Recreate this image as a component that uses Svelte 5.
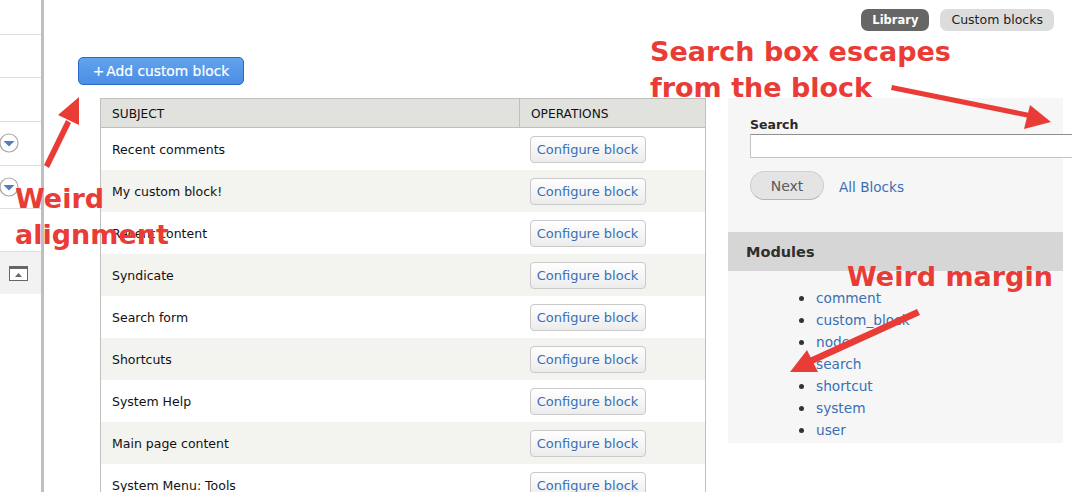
<script>
	const blocks = [
		'Recent comments',
		'My custom block!',
		'Recent content',
		'Syndicate',
		'Search form',
		'Shortcuts',
		'System Help',
		'Main page content',
		'System Menu: Tools'
	];
	const modules = ['comment', 'custom_block', 'node', 'search', 'shortcut', 'system', 'user'];
	const rail_rows = [
		{ height: 35 },
		{ height: 43 },
		{ height: 44 },
		{ height: 44, toggle: true },
		{ height: 43, toggle: true },
		{ height: 43 },
		{ height: 42, tray: true }
	];
</script>

<div class="page">
	<aside class="rail">
		{#each rail_rows as row}
			<div class="rail-row" class:tray={row.tray} style="height: {row.height}px">
				{#if row.toggle}
					<svg class="toggle" width="20" height="20" viewBox="0 0 20 20">
						<circle cx="9" cy="10" r="9" fill="#fff" stroke="#a8a8a8" stroke-width="1.2" />
						<path d="M3.5 8h11L9 13.5z" fill="#4f7fbd" />
					</svg>
				{/if}
				{#if row.tray}
					<svg class="tray-icon" width="20" height="16" viewBox="0 0 20 16">
						<rect x="0.5" y="0.5" width="18" height="14" fill="#fff" stroke="#666" />
						<rect x="0" y="0" width="19" height="3" fill="#666" />
						<path d="M6 11l3.5-4 3.5 4z" fill="#666" />
					</svg>
				{/if}
			</div>
		{/each}
	</aside>

	<main class="main">
		<nav class="tabs">
			<a class="tab active" href="#library">Library</a>
			<a class="tab" href="#custom">Custom blocks</a>
		</nav>

		<a class="add-button" href="#add"><span class="plus">+</span>Add custom block</a>

		<div class="columns">
			<table>
				<thead>
					<tr>
						<th class="subject">SUBJECT</th>
						<th>OPERATIONS</th>
					</tr>
				</thead>
				<tbody>
					{#each blocks as block}
						<tr>
							<td>{block}</td>
							<td class="operation"><a class="configure" href="#configure">Configure block</a></td>
						</tr>
					{/each}
				</tbody>
			</table>

			<section class="filters">
				<div class="search">
					<label for="search">Search</label>
					<input id="search" type="text" />
					<div class="search-actions">
						<button type="button">Next</button>
						<a href="#all">All Blocks</a>
					</div>
				</div>
				<h3>Modules</h3>
				<ul>
					{#each modules as name}
						<li><a href="#{name}">{name}</a></li>
					{/each}
				</ul>
			</section>
		</div>
	</main>

	<!-- red annotations drawn on top of the screenshot -->
	<div class="note search-note">Search box escapes<br />from the block</div>
	<div class="note margin-note">Weird margin</div>
	<div class="note align-note">Weird<br />alignment</div>
	<svg class="arrows" width="1072" height="492" viewBox="0 0 1072 492">
		<g fill="#ea3c37" stroke="none">
			<path d="M44 165L66 120 71 123 49 168z" />
			<path d="M79 97L58 115 79 125z" />
			<path d="M892 85L1035 114 1034 119 891 90z" />
			<path d="M1051 122L1030 105 1024 129z" />
			<path d="M917 309L805 360 808 366 920 315z" />
			<path d="M790 372L807 350 818 372z" />
		</g>
	</svg>
</div>

<style>
	:global(body) {
		margin: 0;
		background: #fff;
	}

	.page {
		position: relative;
		display: flex;
		width: 1072px;
		height: 492px;
		overflow: hidden;
		font-family: 'DejaVu Sans', Verdana, sans-serif;
		font-size: 12.5px;
		color: #111;
	}

	.rail {
		flex: none;
		width: 41px;
		border-right: 3px solid #bfbfbf;
	}

	.rail-row {
		position: relative;
		box-sizing: border-box;
		border-bottom: 1px solid #dedede;
	}

	.rail-row.tray {
		background: #f2f2f2;
		border-bottom: none;
	}

	.toggle {
		position: absolute;
		left: 0;
		top: 11px;
	}

	.tray-icon {
		position: absolute;
		left: 9px;
		top: 14px;
	}

	.main {
		flex: 1;
		min-width: 0;
	}

	.tabs {
		display: flex;
		justify-content: flex-end;
		gap: 11px;
		padding: 9px 18px 0 0;
	}

	.tab {
		height: 22px;
		line-height: 22px;
		padding: 0 11px;
		border-radius: 7px;
		background: #dcdcdc;
		color: #222;
		text-decoration: none;
		font-size: 12.5px;
	}

	.tab.active {
		background: #666;
		color: #fff;
		font-weight: 700;
		font-size: 11.5px;
	}

	.add-button {
		display: block;
		box-sizing: border-box;
		width: 166px;
		height: 28px;
		margin: 26px 0 0 34px;
		line-height: 26px;
		text-align: center;
		color: #fff;
		font-size: 13.8px;
		-webkit-text-stroke: 0.2px #fff;
		text-decoration: none;
		border: 1px solid #2a68c4;
		border-radius: 5px;
		background: linear-gradient(#62a3ec, #4a8ee6);
	}

	.plus {
		margin-right: 2px;
	}

	.columns {
		display: flex;
		align-items: flex-start;
		margin: 13px 0 0 56px;
	}

	table {
		flex: none;
		width: 606px;
		border-collapse: collapse;
		border: 1px solid #bfbfbc;
	}

	th {
		height: 29px;
		padding: 1px 11px 0;
		box-sizing: border-box;
		background: #e1e1dd;
		border-bottom: 1px solid #bfbfbc;
		font-weight: 400;
		text-align: left;
		font-size: 12.2px;
	}

	th.subject {
		width: 419px;
		border-right: 1px solid #bfbfbc;
	}

	td {
		height: 42px;
		padding: 0 11px;
	}

	td.operation {
		padding-left: 10px;
	}

	tbody tr:nth-child(even) {
		background: #f3f3f0;
	}

	.configure {
		display: inline-block;
		box-sizing: border-box;
		width: 116px;
		height: 27px;
		line-height: 25px;
		text-align: center;
		color: #3a6fb5;
		text-decoration: none;
		font-size: 13px;
		border: 1px solid #c9c9c9;
		border-radius: 4px;
		background: linear-gradient(#fff, #ececec);
	}

	.filters {
		flex: none;
		width: 335px;
		margin-left: 22px;
		background: #f6f6f6;
	}

	.search {
		height: 134px;
		padding: 18px 0 0 22px;
		box-sizing: border-box;
	}

	label {
		display: block;
		height: 18px;
		padding-top: 1px;
		margin-bottom: -1px;
		font-weight: 700;
		font-size: 12.5px;
		color: #2a2a2a;
	}

	input {
		display: block;
		box-sizing: border-box;
		width: 340px;
		height: 24px;
		background: #fff;
		border: 1px solid #c4c4c4;
		border-top-color: #8f8f8f;
		border-radius: 0;
		padding: 0;
	}

	.search-actions {
		display: flex;
		align-items: center;
		gap: 15px;
		margin-top: 13px;
	}

	button {
		width: 74px;
		height: 29px;
		padding: 0;
		border: 1px solid #cfcfcf;
		border-bottom-color: #b5b5b5;
		border-radius: 15px;
		background: #e4e4e4;
		color: #5a5a5a;
		font-family: inherit;
		font-size: 14px;
		font-weight: 500;
	}

	a {
		color: #3a6fb5;
		text-decoration: none;
	}

	.search-actions a {
		position: relative;
		top: 1px;
		font-size: 13.6px;
	}

	h3 {
		height: 39px;
		margin: 0;
		padding-left: 18px;
		line-height: 41px;
		background: #d6d6d6;
		color: #2e2e2e;
		font-size: 14.5px;
		font-weight: 700;
	}

	ul {
		margin: 0;
		padding: 15px 0 3px 88px;
	}

	li {
		height: 22px;
		line-height: 22px;
		font-size: 13.7px;
		color: #333;
	}

	li::marker {
		font-size: 17px;
	}

	.note {
		position: absolute;
		color: #ea3c37;
		font-family: 'DejaVu Sans', Verdana, sans-serif;
		font-weight: 700;
		font-size: 27px;
		line-height: 36px;
		white-space: nowrap;
	}

	.search-note {
		left: 650px;
		top: 34px;
	}

	.margin-note {
		left: 847px;
		top: 259px;
	}

	.align-note {
		left: 15px;
		top: 181px;
	}

	.arrows {
		position: absolute;
		left: 0;
		top: 0;
		pointer-events: none;
	}
</style>
